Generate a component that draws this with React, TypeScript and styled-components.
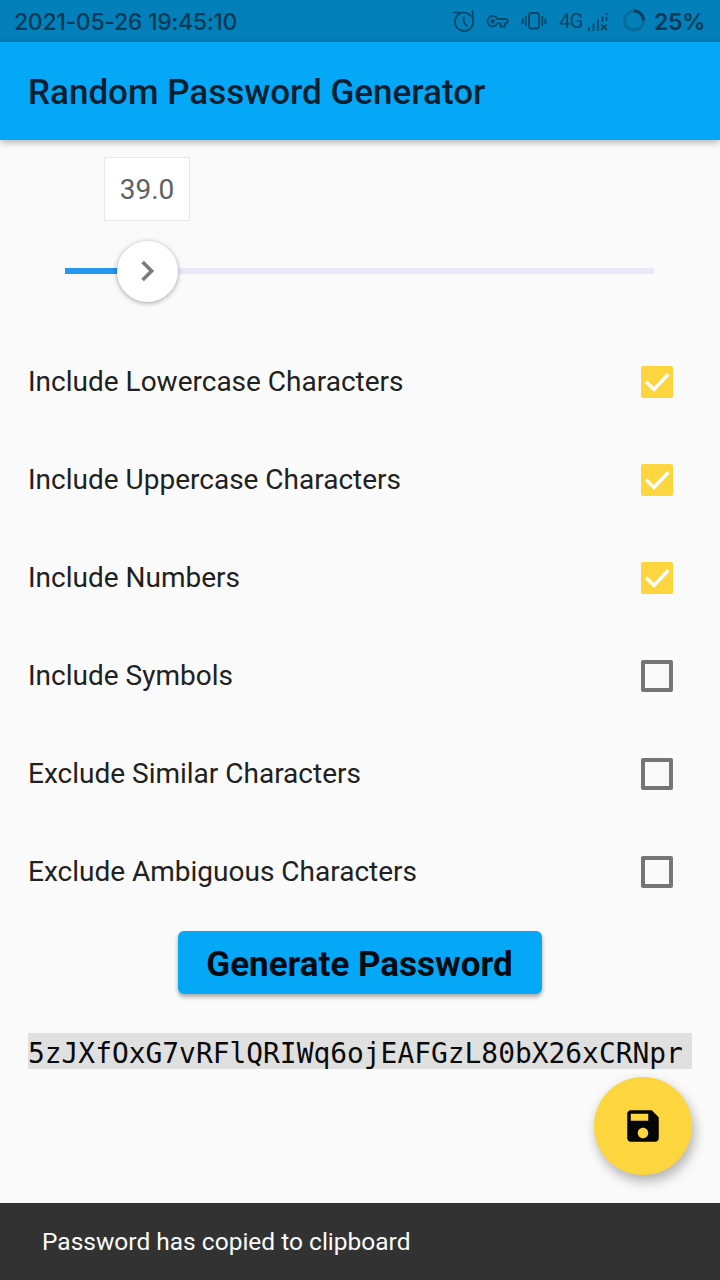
import React from "react";
import styled, { createGlobalStyle } from "styled-components";

const GlobalStyle = createGlobalStyle`
  * { box-sizing: border-box; }
  body { margin: 0; background: #fafafa; font-family: Roboto, "Liberation Sans", sans-serif; }
`;

const Screen = styled.div`
  position: relative;
  display: flex;
  flex-direction: column;
  width: 720px;
  height: 1280px;
  overflow: hidden;
  background: #fafafa;
`;

const StatusBar = styled.div`
  display: flex;
  align-items: center;
  justify-content: space-between;
  flex: none;
  height: 42px;
  padding: 0 15px 0 14px;
  background: #037fb9;
  color: #053a56;
`;

const Clock = styled.span`
  font: 500 23px/42px Inter, sans-serif;
  letter-spacing: -0.3px;
  padding-top: 1px;
  white-space: nowrap;
`;

const StatusIcons = styled.div`
  display: flex;
  align-items: center;
  height: 42px;
`;

const Glyph = styled.svg<{ $gap?: number }>`
  display: block;
  flex: none;
  margin-right: ${(p) => p.$gap ?? 0}px;
  fill: none;
  stroke: #07476a;
  stroke-width: 1.8;
`;

const RingTrack = styled.circle`
  stroke: #086b9e;
  stroke-width: 3;
`;

const RingLevel = styled.path`
  stroke: #063f60;
  stroke-width: 3;
`;

const Network = styled.span`
  width: 23px;
  margin-right: 5px;
  font: 400 20.5px/42px Roboto, sans-serif;
  letter-spacing: -0.9px;
  color: #07476a;
`;

const Battery = styled.span`
  width: 53px;
  font: 600 23px/42px Inter, sans-serif;
  letter-spacing: -0.3px;
  padding-top: 1px;
  margin-right: -2px;
  white-space: nowrap;
`;

const AppBar = styled.header`
  display: flex;
  align-items: center;
  flex: none;
  height: 98px;
  padding: 4px 28px 0;
  background: #05a8f6;
  box-shadow: 0 2px 7px rgba(0, 0, 0, 0.32);
`;

const Title = styled.h1`
  margin: 0;
  font-size: 35px;
  font-weight: 500;
  line-height: 42px;
  color: #062030;
  white-space: nowrap;
`;

const SliderSection = styled.section`
  flex: none;
  height: 193px;
  padding: 17px 66px 0 65px;
`;

const ValueBox = styled.div`
  display: flex;
  align-items: center;
  justify-content: center;
  width: 86px;
  height: 64px;
  margin-left: 39px;
  border: 1px solid #e8e8e8;
  background: #fff;
  font-size: 28px;
  color: #616161;
`;

const Track = styled.div`
  position: relative;
  height: 6px;
  margin-top: 47px;
  background: #eae9f9;
`;

const Fill = styled.div`
  width: 82px;
  height: 6px;
  background: #2796ee;
`;

const Thumb = styled.div`
  position: absolute;
  left: 52px;
  top: -27.5px;
  display: flex;
  align-items: center;
  justify-content: center;
  width: 61px;
  height: 61px;
  border-radius: 50%;
  background: #fff;
  box-shadow: 0 1px 5px rgba(0, 0, 0, 0.36);
`;

const Options = styled.div`
  display: flex;
  flex-direction: column;
  flex: none;
`;

const OptionRow = styled.div`
  display: flex;
  align-items: center;
  justify-content: space-between;
  height: 98px;
  padding: 0 47px 0 28px;
`;

const OptionLabel = styled.span`
  font-size: 28px;
  line-height: 34px;
  color: #212121;
  white-space: nowrap;
`;

const Checkbox = styled.span<{ $on: boolean }>`
  display: flex;
  width: 32px;
  height: 32px;
  margin-bottom: 1px;
  border-radius: 2px;
  border: ${(p) => (p.$on ? "none" : "4px solid #757575")};
  background: ${(p) => (p.$on ? "#fdd63f" : "transparent")};
`;

const GenerateButton = styled.button`
  align-self: center;
  flex: none;
  width: 364px;
  height: 63px;
  margin-top: 10px;
  padding: 5px 1px 0 0;
  border: 0;
  border-radius: 6px;
  background: #05a8f6;
  box-shadow: 0 3px 4px rgba(0, 0, 0, 0.32);
  font: 700 35px/42px Roboto, sans-serif;
  color: #020a12;
  white-space: nowrap;
`;

const PasswordField = styled.div`
  flex: none;
  width: 664px;
  height: 36px;
  margin: 39px 28px 0;
  background: #e0e0e0;
  font: 27.9px/41px "DejaVu Sans Mono", "Liberation Mono", monospace;
  color: #0a0a0a;
  white-space: nowrap;
`;

const SaveButton = styled.button`
  position: absolute;
  right: 28px;
  bottom: 105px;
  display: flex;
  align-items: center;
  justify-content: center;
  width: 98px;
  height: 98px;
  padding: 0;
  border: 0;
  border-radius: 50%;
  background: #fdd63f;
  box-shadow: 3px 7px 12px rgba(0, 0, 0, 0.24), 0 2px 12px rgba(0, 0, 0, 0.08);
`;

const Snackbar = styled.div`
  display: flex;
  align-items: center;
  flex: none;
  height: 77px;
  margin-top: auto;
  padding: 0 42px;
  background: #323232;
  color: #fafafa;
  font-size: 24.5px;
  line-height: 30px;
  white-space: nowrap;
`;

const options = [
  { label: "Include Lowercase Characters", on: true },
  { label: "Include Uppercase Characters", on: true },
  { label: "Include Numbers", on: true },
  { label: "Include Symbols", on: false },
  { label: "Exclude Similar Characters", on: false },
  { label: "Exclude Ambiguous Characters", on: false },
];

export default function App() {
  return (
    <Screen>
      <GlobalStyle />
      <StatusBar>
        <Clock>2021-05-26 19:45:10</Clock>
        <StatusIcons>
          <Glyph width="24" height="24" viewBox="0 0 24 24" $gap={10}>
            <path d="M8 4.6A9.2 9.2 0 1 0 20.6 9.5V1M1 3.6h10.5A9 9 0 0 1 19 7.5" />
            <path d="M11.7 7.5V13l3.4 4.2" />
          </Glyph>
          <Glyph width="24" height="24" viewBox="0 0 24 24" $gap={11}>
            <path d="M11.4 10A5.2 5.2 0 1 0 11.4 14.4H14.6V17.6H18.8V14.4H20.6L22.2 12.2 20.6 10Z" />
            <circle cx="6.7" cy="12.2" r="1.3" />
          </Glyph>
          <Glyph width="26" height="24" viewBox="0 0 26 24" $gap={12}>
            <rect x="8" y="4" width="10" height="15.5" rx="2.5" />
            <path d="M4.7 7v10M1.6 9.5v5.5M21.3 7v10M24.4 9.5v5.5" />
          </Glyph>
          <Network>4G</Network>
          <Glyph width="22" height="24" viewBox="0 0 22 24" $gap={13}>
            <path d="M2 18v4M6.5 14.5V22M11 10.5V22M15.5 7.5V13M19.5 4v2M19.5 8v4" />
            <path d="M14 15.5l6 5.5M20 15.5L14 21" />
          </Glyph>
          <Glyph width="24" height="24" viewBox="0 0 24 24" $gap={8}>
            <RingTrack cx="12" cy="11.5" r="9.5" />
            <RingLevel d="M12 2A9.5 9.5 0 0 1 21.5 11.5" />
          </Glyph>
          <Battery>25%</Battery>
        </StatusIcons>
      </StatusBar>
      <AppBar>
        <Title>Random Password Generator</Title>
      </AppBar>
      <SliderSection>
        <ValueBox>39.0</ValueBox>
        <Track>
          <Fill />
          <Thumb>
            <svg width="24" height="24" viewBox="0 0 24 24" fill="none" stroke="#7b7b7b" strokeWidth="3.6">
              <path d="M6.6 3l9 9-9 9" />
            </svg>
          </Thumb>
        </Track>
      </SliderSection>
      <Options>
        {options.map((o) => (
          <OptionRow key={o.label}>
            <OptionLabel>{o.label}</OptionLabel>
            <Checkbox $on={o.on}>
              {o.on && (
                <svg width="32" height="32" viewBox="0 0 32 32" fill="none" stroke="#fffdf5" strokeWidth="3.6">
                  <path d="M5 15.5l8 8L27.3 8.2" />
                </svg>
              )}
            </Checkbox>
          </OptionRow>
        ))}
      </Options>
      <GenerateButton>Generate Password</GenerateButton>
      <PasswordField>5zJXfOxG7vRFlQRIWq6ojEAFGzL80bX26xCRNpr</PasswordField>
      <SaveButton aria-label="Save">
        <svg width="42" height="42" viewBox="0 0 24 24" fill="#050505">
          <path d="M17 3H5c-1.11 0-2 .9-2 2v14c0 1.1.89 2 2 2h14c1.1 0 2-.9 2-2V7l-4-4zm-5 16c-1.66 0-3-1.34-3-3s1.34-3 3-3 3 1.34 3 3-1.34 3-3 3zm3-10H5V5h10v4z" />
        </svg>
      </SaveButton>
      <Snackbar>Password has copied to clipboard</Snackbar>
    </Screen>
  );
}
